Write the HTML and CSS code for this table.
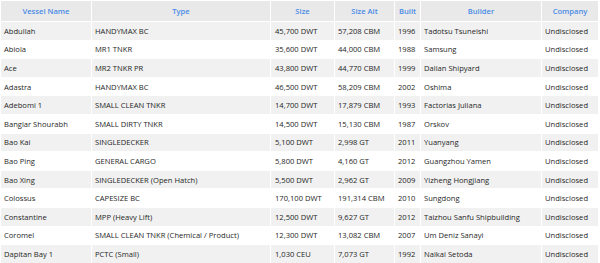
FILE: index.html
```html
<!DOCTYPE html>
<html lang="en">
<head>
    <meta charset="UTF-8">
    <title>Vessels</title>
    <link rel="stylesheet" href="styles.css">
</head>
<body>
    <table class="fleet">
        <colgroup>
            <col class="c-name">
            <col class="c-type">
            <col class="c-size">
            <col class="c-alt">
            <col class="c-built">
            <col class="c-builder">
            <col class="c-company">
        </colgroup>
        <thead>
            <tr>
                <th>Vessel Name</th>
                <th>Type</th>
                <th>Size</th>
                <th>Size Alt</th>
                <th>Built</th>
                <th>Builder</th>
                <th>Company</th>
            </tr>
        </thead>
        <tbody>
            <tr><td>Abdullah</td><td>HANDYMAX BC</td><td>45,700 DWT</td><td>57,208 CBM</td><td>1996</td><td>Tadotsu Tsuneishi</td><td>Undisclosed</td></tr>
            <tr><td>Abiola</td><td>MR1 TNKR</td><td>35,600 DWT</td><td>44,000 CBM</td><td>1988</td><td>Samsung</td><td>Undisclosed</td></tr>
            <tr><td>Ace</td><td>MR2 TNKR PR</td><td>43,800 DWT</td><td>44,770 CBM</td><td>1999</td><td>Dalian Shipyard</td><td>Undisclosed</td></tr>
            <tr><td>Adastra</td><td>HANDYMAX BC</td><td>46,500 DWT</td><td>58,209 CBM</td><td>2002</td><td>Oshima</td><td>Undisclosed</td></tr>
            <tr><td>Adebomi 1</td><td>SMALL CLEAN TNKR</td><td>14,700 DWT</td><td>17,879 CBM</td><td>1993</td><td>Factorias Juliana</td><td>Undisclosed</td></tr>
            <tr><td>Banglar Shourabh</td><td>SMALL DIRTY TNKR</td><td>14,500 DWT</td><td>15,130 CBM</td><td>1987</td><td>Orskov</td><td>Undisclosed</td></tr>
            <tr><td>Bao Kai</td><td>SINGLEDECKER</td><td>5,100 DWT</td><td>2,998 GT</td><td>2011</td><td>Yuanyang</td><td>Undisclosed</td></tr>
            <tr><td>Bao Ping</td><td>GENERAL CARGO</td><td>5,800 DWT</td><td>4,160 GT</td><td>2012</td><td>Guangzhou Yamen</td><td>Undisclosed</td></tr>
            <tr><td>Bao Xing</td><td>SINGLEDECKER (Open Hatch)</td><td>5,500 DWT</td><td>2,962 GT</td><td>2009</td><td>Yizheng Hongjiang</td><td>Undisclosed</td></tr>
            <tr><td>Colossus</td><td>CAPESIZE BC</td><td>170,100 DWT</td><td>191,314 CBM</td><td>2010</td><td>Sungdong</td><td>Undisclosed</td></tr>
            <tr><td>Constantine</td><td>MPP (Heavy Lift)</td><td>12,500 DWT</td><td>9,627 GT</td><td>2012</td><td>Taizhou Sanfu Shipbuilding</td><td>Undisclosed</td></tr>
            <tr><td>Coromel</td><td>SMALL CLEAN TNKR (Chemical / Product)</td><td>12,300 DWT</td><td>13,082 CBM</td><td>2007</td><td>Um Deniz Sanayi</td><td>Undisclosed</td></tr>
            <tr><td>Dapitan Bay 1</td><td>PCTC (Small)</td><td>1,030 CEU</td><td>7,073 GT</td><td>1992</td><td>Naikai Setoda</td><td>Undisclosed</td></tr>
        </tbody>
    </table>
</body>
</html>
```

FILE: styles.css
```css
body {
    margin: 0;
    padding: 0;
    background: #fff;
    font-family: "Open Sans", sans-serif;
    font-size: 7.6px;
    color: #1f1f1f;
}

.fleet {
    width: 598px;
    border-collapse: collapse;
    table-layout: fixed;
}

.c-name { width: 91px; }
.c-type { width: 179px; }
.c-size { width: 64px; }
.c-alt { width: 60px; }
.c-built { width: 26px; }
.c-builder { width: 121px; }
.c-company { width: 57px; }

.fleet th,
.fleet td {
    border: 1px solid #fff;
    white-space: nowrap;
    overflow: hidden;
}

.fleet th {
    height: 20px;
    padding: 0;
    background: #e9e9e9;
    color: #4a8be6;
    font-weight: 600;
    text-align: center;
}

.fleet td {
    height: 17.6px;
    padding: 0 2px 0 3px;
    text-align: left;
}

.fleet td:nth-child(3) {
    padding-left: 4px;
}

.fleet tbody tr:nth-child(odd) td {
    background: #f1f1f1;
}
```
